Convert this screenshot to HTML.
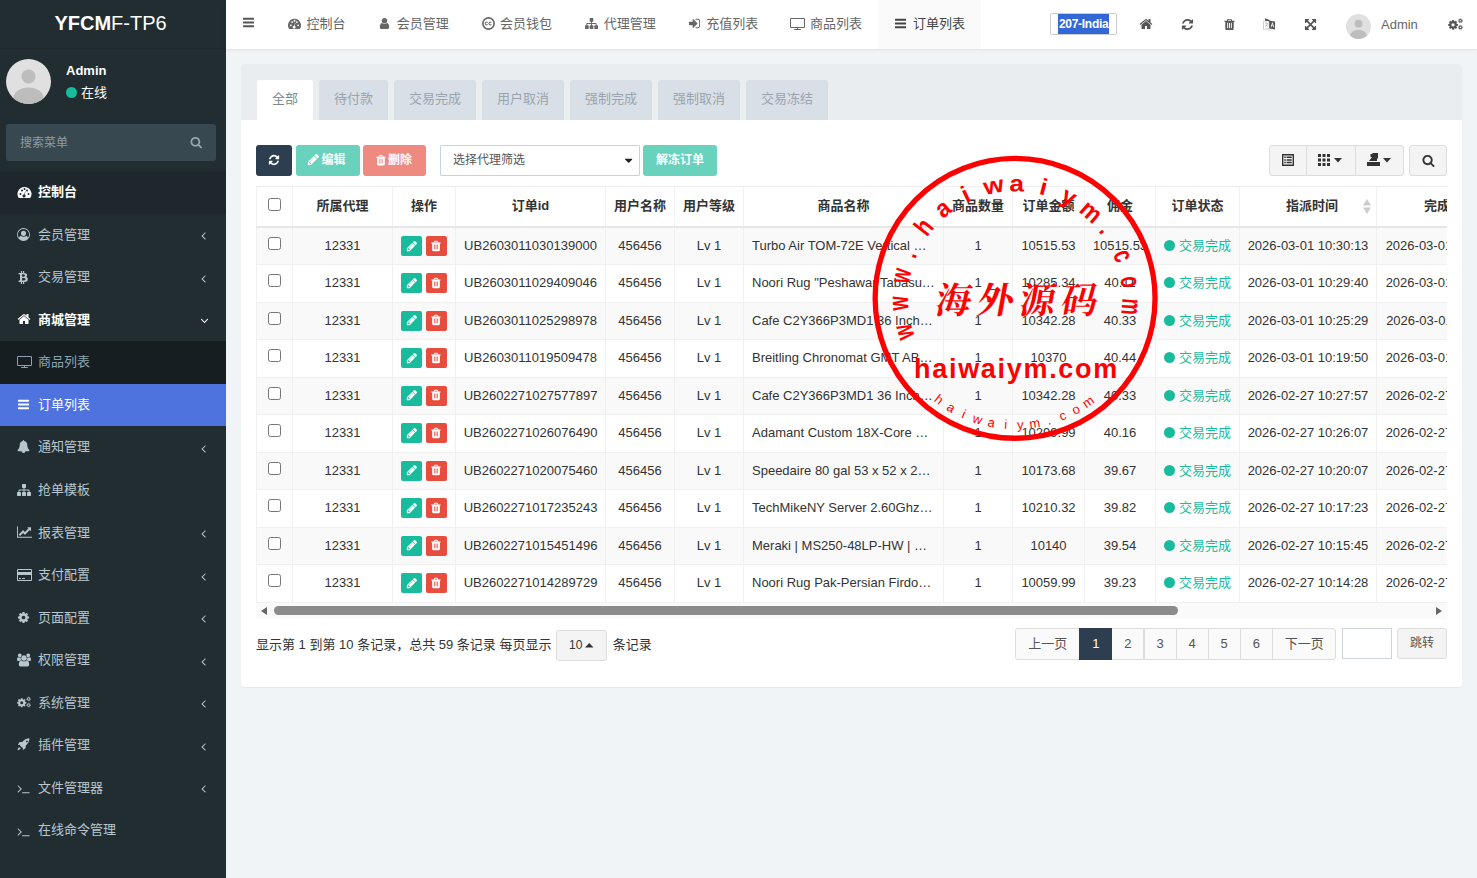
<!DOCTYPE html>
<html lang="zh-CN">
<head>
<meta charset="utf-8">
<title>YFCMF-TP6</title>
<style>
*{box-sizing:border-box;margin:0;padding:0}
html,body{width:1477px;height:878px;overflow:hidden}
body{font-family:"Liberation Sans","Noto Sans CJK SC",sans-serif;font-size:13px;line-height:1.42857;color:#333;background:#f1f4f6;position:relative}
svg{display:inline-block;vertical-align:middle;fill:currentColor}
/* sidebar */
#side{position:absolute;left:0;top:0;width:226px;height:878px;background:#222d32;color:#b8c7ce}
#logo{height:49px;line-height:47px;text-align:center;padding-right:5px;color:#fff;font-size:20px;background:#222d32;border-bottom:1px solid #1f292e;letter-spacing:0}
#logo b{font-weight:bold}
#user{position:absolute;left:0;top:49px;width:226px;height:65px}
#user .av{position:absolute;left:6px;top:10px;width:45px;height:45px;border-radius:50%;background:#e0e0e0;overflow:hidden}
#user .nm{position:absolute;left:66px;top:60px;color:#fff;font-weight:bold;font-size:14px}
#search{position:absolute;left:6px;top:124px;width:210px;height:37px;border-radius:3px;background:#374850;color:#8d9ca3;font-size:12px;line-height:38px;padding-left:14px}
#menu{position:absolute;left:0;top:171px;width:226px;list-style:none}
#menu li{height:42.57px;padding:12px 5px 12px 15px;position:relative;white-space:nowrap;font-size:13px;color:#b8c7ce}
#menu li .ic{position:absolute;left:17px;top:12px;width:20px;height:18px;text-align:left;line-height:18px}
#menu li .tx{position:absolute;left:38px;top:12.0px}
#menu li .ic svg{vertical-align:middle;margin-top:-2px}
#menu li .ar{position:absolute;right:20px;top:15.5px}
#menu li.hd{background:#1e282c;color:#fff;font-weight:bold}
#menu li.op{color:#fff;font-weight:bold}
#menu li.op2{color:#b8c7ce}
#menu li.sub{background:#171e21;color:#8aa4af;padding-left:15px;height:43.2px}
#menu li.act{background:#4e73df;color:#fff;height:41.94px}
#menu li.act .ic,#menu li.act .tx{top:11.4px}
/* top nav */
#nav{position:absolute;left:226px;top:0;width:1251px;height:49px;background:#fff;box-shadow:0 1px 3px rgba(0,0,0,.08);color:#555}
#nav .tab{position:absolute;top:0;height:48px;line-height:47px;font-size:13px;color:#666;white-space:nowrap}
#nav .tab svg{margin-right:5px;margin-top:-2px}
#nav .tab.on{background:#fafafa;color:#444;height:49px}
#nav .ri{position:absolute;top:0;height:48px;line-height:48px;color:#555}
/* panel */
#panel{position:absolute;left:241px;top:64px;width:1221px;height:623px;background:#fff;border-radius:3px;box-shadow:0 1px 1px rgba(0,0,0,.05)}
#phead{position:absolute;left:0;top:0;width:1221px;height:56px;background:#e9edf0;border-radius:3px 3px 0 0}
#phead .t{position:absolute;top:16px;height:40px;line-height:37px;background:#d9dfe6;color:#9aa4ad;font-size:13px;text-align:center;border-radius:3px 3px 0 0}
#phead .t.on{background:#fff;color:#7b8a8b}
.btn{position:absolute;height:31px;line-height:31px;border-radius:3px;color:#fff;font-size:12px;text-align:center;font-weight:normal;white-space:nowrap}

#tb{position:absolute;left:15px;top:122px;width:1191px;height:417px;overflow:hidden}
#tb table{border-collapse:collapse;table-layout:fixed;width:1259px;font-size:13px;color:#333}
#tb th,#tb td{border:1px solid #f0f0f0;text-align:center;vertical-align:middle;white-space:nowrap;overflow:hidden;padding:0}
#tb th{height:40.5px;font-weight:bold;border-bottom:2px solid #e6e6e6;color:#333}
#tb td{height:37.5px;padding-top:0.6px}
#tb tr.o td{background:#f9f9f9}
#tb td.l{text-align:left;padding-left:8px}
.cb{display:inline-block;width:13px;height:13px;border:1px solid #767676;border-radius:2.5px;background:#fff;vertical-align:middle;margin-top:-4px}
#tb td .cb{margin-top:-6px}
.xb{display:inline-block;width:21px;height:20px;border-radius:2px;vertical-align:middle;color:#fff;text-align:center;line-height:18px}
.xb svg{vertical-align:middle}
#tb td .xb{margin-top:-.6px}
.st{color:#18bc9c}
.st i{display:inline-block;width:11px;height:11px;border-radius:50%;background:#18bc9c;margin-right:4px;vertical-align:-1px}
.pg{position:absolute;top:564px;height:31.5px;line-height:30px;border:1px solid #ddd;background:#fafafa;color:#555;text-align:center;font-size:13px}
</style>
</head>
<body>
<svg width="0" height="0" style="position:absolute">
<defs>
<symbol id="i-bars" viewBox="0 0 1536 1792"><path d="M1536 1344v128q0 26-19 45t-45 19H64q-26 0-45-19t-19-45v-128q0-26 19-45t45-19h1408q26 0 45 19t19 45zm0-512v128q0 26-19 45t-45 19H64q-26 0-45-19T0 960V832q0-26 19-45t45-19h1408q26 0 45 19t19 45zm0-512v128q0 26-19 45t-45 19H64q-26 0-45-19T0 448V320q0-26 19-45t45-19h1408q26 0 45 19t19 45z"/></symbol>
<symbol id="i-search" viewBox="0 0 1792 1792"><path d="M1216 832q0-185-131.500-316.500t-316.500-131.500-316.500 131.500-131.500 316.500 131.500 316.500 316.500 131.500 316.500-131.500 131.500-316.500zm512 832q0 52-38 90t-90 38q-54 0-90-38l-343-342q-179 124-399 124-143 0-273.500-55.500t-225-150-150-225-55.500-273.500 55.500-273.500 150-225 225-150 273.500-55.500 273.500 55.500 225 150 150 225 55.500 273.500q0 220-124 399l343 343q37 37 37 90z"/></symbol>
<symbol id="i-home" viewBox="0 0 1792 1792"><path d="M1472 992v480q0 26-19 45t-45 19h-384v-384h-256v384h-384q-26 0-45-19t-19-45v-480q0-1 .5-3t.5-3l575-474 575 474q1 2 1 6zm223-69l-62 74q-8 9-21 11h-3q-13 0-21-7l-692-577-692 577q-12 8-24 7-13-2-21-11l-62-74q-8-10-7-23.500t11-21.500l719-599q32-26 76-26t76 26l244 204v-195q0-14 9-23t23-9h192q14 0 23 9t9 23v408l219 182q10 8 11 21.500t-7 23.500z"/></symbol>
<symbol id="i-trash" viewBox="0 0 1792 1792"><path d="M704 1376v-704q0-14-9-23t-23-9h-64q-14 0-23 9t-9 23v704q0 14 9 23t23 9h64q14 0 23-9t9-23zm256 0v-704q0-14-9-23t-23-9h-64q-14 0-23 9t-9 23v704q0 14 9 23t23 9h64q14 0 23-9t9-23zm256 0v-704q0-14-9-23t-23-9h-64q-14 0-23 9t-9 23v704q0 14 9 23t23 9h64q14 0 23-9t9-23zm-544-992h448l-48-117q-7-9-17-11h-317q-10 2-17 11zm928 32v64q0 14-9 23t-23 9h-96v948q0 83-47 143.500t-113 60.500h-832q-66 0-113-58.500t-47-141.500v-952h-96q-14 0-23-9t-9-23v-64q0-14 9-23t23-9h309l70-167q15-37 54-63t79-26h320q40 0 79 26t54 63l70 167h309q14 0 23 9t9 23z"/></symbol>
<symbol id="i-refresh" viewBox="0 0 1792 1792"><path d="M1639 1056q0 5-1 7-64 268-268 434.500t-478 166.500q-146 0-282.500-55t-243.500-157l-129 129q-19 19-45 19t-45-19-19-45v-448q0-26 19-45t45-19h448q26 0 45 19t19 45-19 45l-137 137q71 66 161 102t187 36q134 0 250-65t186-179q11-17 53-117 8-23 30-23h192q13 0 22.500 9.500t9.500 22.500zm25-800v448q0 26-19 45t-45 19h-448q-26 0-45-19t-19-45 19-45l138-138q-148-137-349-137-134 0-250 65t-186 179q-11 17-53 117-8 23-30 23h-199q-13 0-22.500-9.500t-9.500-22.500v-7q65-268 270-434.500t480-166.500q146 0 284 55.500t245 156.500l130-129q19-19 45-19t45 19 19 45z"/></symbol>
<symbol id="i-pencil" viewBox="0 0 1792 1792"><path d="M491 1536l91-91-235-235-91 91v107h128v128h107zm523-928q0-22-22-22-10 0-17 7l-542 542q-7 7-7 17 0 22 22 22 10 0 17-7l542-542q7-7 7-17zm-54-192l416 416-832 832h-416v-416zm683 96q0 53-37 90l-166 166-416-416 166-165q36-38 90-38 53 0 91 38l235 234q37 39 37 91z"/></symbol>
<symbol id="i-user" viewBox="0 0 1792 1792"><path d="M1536 1399q0 109-62.500 187t-150.500 78h-854q-88 0-150.500-78t-62.500-187q0-85 8.500-160.500t31.500-152 58.500-131 94-89 134.500-34.500q131 128 313 128t313-128q76 0 134.500 34.500t94 89 58.500 131 31.500 152 8.500 160.500zm-256-887q0 159-112.500 271.500t-271.500 112.500-271.500-112.500-112.500-271.500 112.500-271.500 271.500-112.500 271.500 112.500 112.500 271.500z"/></symbol>
<symbol id="i-bell" viewBox="0 0 1792 1792"><path d="M912 1696q0-16-16-16-59 0-101.500-42.500t-42.500-101.500q0-16-16-16t-16 16q0 73 51.500 124.500t124.500 51.500q16 0 16-16zm816-288q0 52-38 90t-90 38h-448q0 106-75 181t-181 75-181-75-75-181h-448q-52 0-90-38t-38-90q50-42 91-88t85-119.500 74.500-158.500 50-206 19.500-260q0-152 117-282.500t307-158.500q-8-19-8-39 0-40 28-68t68-28 68 28 28 68q0 20-8 39 190 28 307 158.500t117 282.500q0 139 19.500 260t50 206 74.500 158.500 85 119.500 91 88z"/></symbol>
<symbol id="i-cog" viewBox="0 0 1792 1792"><path d="M1152 896q0-106-75-181t-181-75-181 75-75 181 75 181 181 75 181-75 75-181zm512-109v222q0 12-8 23t-20 13l-185 28q-19 54-39 91 35 50 107 138 10 12 10 25t-9 23q-27 37-99 108t-94 71q-12 0-26-9l-138-108q-44 23-91 38-16 136-29 186-7 28-36 28h-222q-14 0-24.500-8.500t-11.500-21.500l-28-184q-49-16-90-37l-141 107q-10 9-25 9-14 0-25-11-126-114-165-168-7-10-7-23 0-12 8-23 15-21 51-66.500t54-70.500q-27-50-41-99l-183-27q-13-2-21-12.500t-8-23.500v-222q0-12 8-23t19-13l186-28q14-46 39-92-40-57-107-138-10-12-10-24 0-10 9-23 26-36 98.500-107.500t94.500-71.500q13 0 26 10l138 107q44-23 91-38 16-136 29-186 7-28 36-28h222q14 0 24.500 8.500t11.500 21.500l28 184q49 16 90 37l142-107q9-9 24-9 13 0 25 10 129 119 165 170 7 8 7 22 0 12-8 23-15 21-51 66.500t-54 70.500q26 50 41 98l183 28q13 2 21 12.500t8 23.500z"/></symbol>
<symbol id="i-desktop" viewBox="0 0 15 12"><path fill-rule="evenodd" d="M1.200 0h12.600a1.200 1.200 0 0 1 1.200 1.200v7.600a1.200 1.200 0 0 1-1.200 1.200H8v1h2.500a.5.5 0 0 1 0 1h-6a.5.5 0 0 1 0-1H7v-1H1.200A1.200 1.200 0 0 1 0 8.800V1.200A1.200 1.200 0 0 1 1.200 0zM1 1.300v7.400a.3.3 0 0 0 .3.300h12.400a.3.3 0 0 0 .3-.3V1.300a.3.3 0 0 0-.3-.3H1.300a.3.3 0 0 0-.3.300z"/></symbol>
<symbol id="i-dash" viewBox="0 0 1792 1792"><path fill-rule="evenodd" d="M896 256a896 896 0 0 0-756 1376q18 32 54 32h1404q36 0 54-32A896 896 0 0 0 896 256zM384 1280a128 128 0 1 1 0-256 128 128 0 0 1 0 256zm192-448a128 128 0 1 1 0-256 128 128 0 0 1 0 256zm320-192a128 128 0 1 1 0-256 128 128 0 0 1 0 256zm-30 560 100-380q8-28 36-22t24 36l-100 382a200 200 0 1 1-60-16zm350-368a128 128 0 1 1 0-256 128 128 0 0 1 0 256zm192 448a128 128 0 1 1 0-256 128 128 0 0 1 0 256z"/></symbol>
<symbol id="i-sitemap" viewBox="0 0 1792 1792"><path d="M1792 1248v320q0 40-28 68t-68 28h-320q-40 0-68-28t-28-68v-320q0-40 28-68t68-28h96v-192h-512v192h96q40 0 68 28t28 68v320q0 40-28 68t-68 28h-320q-40 0-68-28t-28-68v-320q0-40 28-68t68-28h96v-192h-512v192h96q40 0 68 28t28 68v320q0 40-28 68t-68 28h-320q-40 0-68-28t-28-68v-320q0-40 28-68t68-28h96v-192q0-52 38-90t90-38h512v-192h-96q-40 0-68-28t-28-68v-320q0-40 28-68t68-28h320q40 0 68 28t28 68v320q0 40-28 68t-68 28h-96v192h512q52 0 90 38t38 90v192h96q40 0 68 28t28 68z"/></symbol>
<symbol id="i-signin" viewBox="0 0 1792 1792"><path d="M1312 896q0 26-19 45l-544 544q-19 19-45 19t-45-19-19-45v-288h-448q-26 0-45-19t-19-45v-384q0-26 19-45t45-19h448v-288q0-26 19-45t45-19 45 19l544 544q19 19 19 45zm352-352v704q0 119-84.500 203.500t-203.500 84.500h-320q-13 0-22.500-9.500t-9.500-22.500q0-4-1-20t-.5-26.500 3-23.500 10-19.500 20.500-6.500h320q66 0 113-47t47-113v-704q0-66-47-113t-113-47h-312l-11.500-1-11.500-3-8-5.500-7-9-2-13.500q0-4-1-20t-.5-26.500 3-23.500 10-19.500 20.500-6.500h320q119 0 203.500 84.500t84.500 203.500z"/></symbol>
<symbol id="i-angle-l" viewBox="0 0 640 1792"><path d="M627 544q0 13-10 23l-393 393 393 393q10 10 10 23t-10 23l-50 50q-10 10-23 10t-23-10l-466-466q-10-10-10-23t10-23l466-466q10-10 23-10t23 10l50 50q10 10 10 23z"/></symbol>
<symbol id="i-angle-d" viewBox="0 0 1152 1792"><path d="M1075 736q0 13-10 23l-466 466q-10 10-23 10t-23-10l-466-466q-10-10-10-23t10-23l50-50q10-10 23-10t23 10l393 393 393-393q10-10 23-10t23 10l50 50q10 10 10 23z"/></symbol>
<symbol id="i-caret-d" viewBox="0 0 1024 1792"><path d="M1024 704q0 26-19 45l-448 448q-19 19-45 19t-45-19l-448-448q-19-19-19-45t19-45 45-19h896q26 0 45 19t19 45z"/></symbol>
<symbol id="i-userc" viewBox="0 0 1792 1792"><path fill-rule="evenodd" d="M896 0a896 896 0 1 0 0 1792A896 896 0 0 0 896 0zm0 128a768 768 0 0 1 618 1224q-50-246-226-290-150 154-392 154t-392-154q-176 44-226 290A768 768 0 0 1 896 128zm0 256a352 352 0 1 0 0 704 352 352 0 0 0 0-704z"/></symbol>
<symbol id="i-btc" viewBox="0 0 1280 1792"><path fill-rule="evenodd" d="M1167 640q18 182-131 258 117 28 175 103t45 214q-7 71-32.500 125t-64.500 89-97 58.500-121.500 34.500-145.500 15v255h-154v-251q-80 0-122-1v252h-154v-255q-18 0-54-.5t-55-.5h-200l31-183h111q50 0 58-51v-402h16q-6-1-16-1v-287q-13-68-89-68h-111v-164l212 1q64 0 97-1v-252h154v247q82-2 122-2v-245h154v252q79 7 140 22.500t113 45 82.500 78 36.500 114.500zm-215 545q0-36-15-64t-37-46-57.500-30.500-65.500-18.500-74-9-69-3-64.500.5-46.500 1v338q8 0 37 .5t48 .5 53-1.500 58.500-4 57-8.500 55.500-14 47.500-21 39.500-30 24.500-40 9.500-51zm-71-476q0-33-12.500-58.500t-30.500-42-48-28-55-16.500-61.500-8-58-2.500-54 1-39.500.5v307q5 0 34.500.5t46.500 0 50-2 55-5.500 51.500-11 48.500-18.500 37-27 27-38.500 9-51z"/></symbol>
<symbol id="i-chart" viewBox="0 0 2048 1792"><path d="M2048 1536v128h-2048v-1536h128v1408h1920zm-128-1248v435q0 21-19.500 29.500t-35.500-7.500l-121-121-633 633q-10 10-23 10t-23-10l-233-233-416 416-192-192 585-585q10-10 23-10t23 10l233 233 464-464-121-121q-16-16-7.500-35.500t29.500-19.500h435q14 0 23 9t9 23z"/></symbol>
<symbol id="i-card" viewBox="0 0 1920 1792"><path d="M1760 128q66 0 113 47t47 113v1216q0 66-47 113t-113 47h-1600q-66 0-113-47t-47-113v-1216q0-66 47-113t113-47h1600zm-1600 128q-13 0-22.500 9.500t-9.500 22.500v224h1664v-224q0-13-9.500-22.500t-22.500-9.500h-1600zm1600 1280q13 0 22.500-9.500t9.500-22.500v-608h-1664v608q0 13 9.500 22.500t22.500 9.500h1600zm-1504-128v-128h256v128h-256zm384 0v-128h384v128h-384z"/></symbol>
<symbol id="i-users" viewBox="0 0 1920 1792"><path d="M593 896q-162 5-265 128h-134q-82 0-138-40.500t-56-118.500q0-353 124-353 6 0 43.500 21t97.500 42.500 119 21.500q67 0 133-23-5 37-5 66 0 139 81 256zm1071 637q0 120-73 189.500t-194 69.500h-874q-121 0-194-69.500t-73-189.500q0-53 3.500-103.500t14-109 26.500-108.500 43-97.500 62-81 85.500-53.500 111.500-20q10 0 43 21.500t73 48 107 48 135 21.500 135-21.500 107-48 73-48 43-21.500q61 0 111.500 20t85.500 53.500 62 81 43 97.500 26.500 108.500 14 109 3.500 103.500zm-1024-1277q0 106-75 181t-181 75-181-75-75-181 75-181 181-75 181 75 75 181zm704 384q0 159-112.500 271.500t-271.500 112.500-271.500-112.500-112.500-271.500 112.500-271.500 271.500-112.500 271.500 112.500 112.500 271.500zm576 225q0 78-56 118.500t-138 40.500h-134q-103-123-265-128 81-117 81-256 0-29-5-66 66 23 133 23 59 0 119-21.500t97.500-42.500 43.500-21q124 0 124 353zm-128-609q0 106-75 181t-181 75-181-75-75-181 75-181 181-75 181 75 75 181z"/></symbol>
<symbol id="i-cogs" viewBox="0 0 1920 1792"><g><path fill-rule="evenodd" d="M1140 900l-150-22q-12-40-32-76 30-42 88-112 8-10 8-20 0-8-8-18-22-30-80-88t-78-58q-10 0-20 8l-112 88q-36-18-76-32-12-110-24-152-6-22-30-22H448q-12 0-20 7t-10 17l-22 150q-40 14-74 30L206 512q-8-8-20-8-10 0-20 8-106 98-136 140-6 6-6 18 0 10 6 18 12 18 42 55t44 57q-22 42-34 82L-66 904q-10 2-17 10t-7 20v180q0 10 7 19t17 11l150 22q12 38 32 76-32 46-88 112-8 10-8 20 0 11 8 19 20 30 80 88t78 59q10 0 22-8l112-88q36 18 74 30 14 112 24 152 6 24 30 24h180q12 0 20-7t10-17l22-150q40-14 74-30l116 88q8 6 20 6 10 0 20-8 104-96 136-140 6-8 6-18 0-10-6-20-12-16-42-54t-44-56q22-42 34-82l150-22q10-2 17-11t7-19V934q0-10-7-19t-17-11zM538 1234a210 210 0 1 1 0-420 210 210 0 0 1 0 420z" transform="translate(110 -20)"/><circle cx="1590" cy="480" r="165" fill="none" stroke="currentColor" stroke-width="130"/><circle cx="1590" cy="480" r="260" fill="none" stroke="currentColor" stroke-width="110" stroke-dasharray="102 102"/><circle cx="1590" cy="1330" r="165" fill="none" stroke="currentColor" stroke-width="130"/><circle cx="1590" cy="1330" r="260" fill="none" stroke="currentColor" stroke-width="110" stroke-dasharray="102 102"/></g></symbol>
<symbol id="i-rocket" viewBox="0 0 1792 1792"><path d="M1700 60q-30-30-70-24-420 50-760 360-60 56-130 140l-360 30q-30 4-46 30L150 900q-14 30 6 56t52 20l250-50q-20 50-34 90-8 30 14 52l250 250q22 22 52 14 40-12 90-34l-50 250q-6 32 20 52t56 6l304-184q26-16 30-46l30-360q84-70 140-130 310-340 360-760 6-40-20-66zm-340 530a130 130 0 1 1 0-260 130 130 0 0 1 0 260zM330 1270q-110 30-170 130T60 1700q200-40 300-100t130-170z"/></symbol>
<symbol id="i-term" viewBox="0 0 1792 1792"><path d="M649 983l-466 466q-10 10-23 10t-23-10l-50-50q-10-10-10-23t10-23l393-393-393-393q-10-10-10-23t10-23l50-50q10-10 23-10t23 10l466 466q10 10 10 23t-10 23zm1079 457v64q0 14-9 23t-23 9h-960q-14 0-23-9t-9-23v-64q0-14 9-23t23-9h960q14 0 23 9t9 23z"/></symbol>
<symbol id="i-cc" viewBox="0 0 1792 1792"><circle cx="896" cy="896" r="780" fill="none" stroke="currentColor" stroke-width="230"/><path d="M764.400 761.600A190 190 0 1 0 764.400 1030.400M1284.400 761.600A190 190 0 1 0 1284.400 1030.400" fill="none" stroke="currentColor" stroke-width="140"/></symbol>
<symbol id="i-full" viewBox="0 0 1792 1792"><path d="M1411 541l-355 355 355 355 144-144q29-31 70-14 39 17 39 59v448q0 26-19 45t-45 19h-448q-42 0-59-40-17-39 14-69l144-144-355-355-355 355 144 144q31 30 14 69-17 40-59 40h-448q-26 0-45-19t-19-45v-448q0-42 40-59 39-17 69 14l144 144 355-355-355-355-144 144q-19 19-45 19-12 0-24-5-40-17-40-59v-448q0-26 19-45t45-19h448q42 0 59 40 17 39-14 69l-144 144 355 355 355-355-144-144q-31-30-14-69 17-40 59-40h448q26 0 45 19t19 45v448q0 42-39 59-13 5-25 5-26 0-45-19z"/></symbol>
<symbol id="i-lang" viewBox="0 0 13 13"><path d="M2 .2l4.600 1.700v1.300L2 2.700z"/><path fill-rule="evenodd" d="M6.200 2.600L12 3.600v7.800l-5.800-1zM9.100 4.600l-1.500 4.600h.8l.35-1.150h1.300l.35 1.150h.8L9.700 4.600zm.3 1.200l.45 1.600h-.9z"/><path d="M.5 3.400l5.700-.8v7.800l-5.700.9z" fill="none" stroke="currentColor" stroke-width=".5" opacity=".55"/><path d="M2 5.200h2.800M3.400 4.500v.7M2.300 8.400c1.300-.6 2-1.700 2.200-3.200M2.600 6.300c.4 1 1.200 1.700 2.200 2.100" fill="none" stroke="currentColor" stroke-width=".55" opacity=".6"/><path d="M3.500 11.800l4 .7 1.500-1.200" fill="none" stroke="currentColor" stroke-width=".4" opacity=".5"/></symbol>
<symbol id="i-listalt" viewBox="0 0 1792 1792"><path d="M384 1184v64q0 13-9.500 22.500t-22.500 9.500h-64q-13 0-22.500-9.500t-9.500-22.500v-64q0-13 9.500-22.500t22.500-9.500h64q13 0 22.500 9.500t9.500 22.500zm0-256v64q0 13-9.500 22.500t-22.500 9.500h-64q-13 0-22.500-9.500t-9.500-22.500v-64q0-13 9.500-22.500t22.500-9.500h64q13 0 22.500 9.500t9.500 22.500zm0-256v64q0 13-9.500 22.500t-22.500 9.500h-64q-13 0-22.500-9.500t-9.500-22.500v-64q0-13 9.500-22.500t22.500-9.500h64q13 0 22.500 9.500t9.500 22.500zm1152 512v64q0 13-9.500 22.500t-22.500 9.500h-960q-13 0-22.500-9.500t-9.500-22.500v-64q0-13 9.500-22.500t22.500-9.500h960q13 0 22.500 9.500t9.500 22.500zm0-256v64q0 13-9.500 22.500t-22.500 9.500h-960q-13 0-22.500-9.500t-9.500-22.500v-64q0-13 9.500-22.500t22.500-9.500h960q13 0 22.500 9.500t9.500 22.500zm0-256v64q0 13-9.500 22.500t-22.500 9.500h-960q-13 0-22.500-9.500t-9.500-22.500v-64q0-13 9.500-22.500t22.500-9.500h960q13 0 22.500 9.500t9.500 22.500zm128 704v-832q0-13-9.500-22.500t-22.500-9.500h-1472q-13 0-22.500 9.500t-9.500 22.500v832q0 13 9.500 22.500t22.500 9.500h1472q13 0 22.500-9.500t9.500-22.500zm128-1088v1088q0 66-47 113t-113 47h-1472q-66 0-113-47t-47-113v-1088q0-66 47-113t113-47h1472q66 0 113 47t47 113z"/></symbol>
<symbol id="i-trash2" viewBox="0 0 1792 1792"><path fill-rule="evenodd" d="M672 384h448l-48-117q-7-9-17-11h-317q-10 2-17 11zm928 32v64q0 14-9 23t-23 9h-96v948q0 83-47 143.500t-113 60.500h-832q-66 0-113-58.500t-47-141.500v-952h-96q-14 0-23-9t-9-23v-64q0-14 9-23t23-9h309l70-167q15-37 54-63t79-26h320q40 0 79 26t54 63l70 167h309q14 0 23 9t9 23zM590 680v700h110V680zm250 0v700h110V680zm250 0v700h110V680z"/></symbol>
</defs></svg>
<div id="side">
<div id="logo"><b>YFCM</b>F-TP6</div>
<div id="user"><div class="av"><svg width="45" height="45" viewBox="0 0 45 45"><circle cx="22.5" cy="17.5" r="7" fill="#bdbdbd"/><ellipse cx="22.5" cy="39" rx="15" ry="10.5" fill="#bdbdbd"/></svg></div></div>
<div class="nm" style="position:absolute;left:66px;top:60.500px;color:#fff;font-weight:bold;font-size:13px;line-height:20px">Admin</div>
<div style="position:absolute;left:66px;top:82.5px;color:#fff;font-size:13px;line-height:20px"><span style="display:inline-block;width:11px;height:11px;border-radius:50%;background:#18bc9c;vertical-align:-1px;margin-right:4px"></span>在线</div>
<div id="search">搜索菜单<svg width="12.500" height="12.500" style="position:absolute;right:13.500px;top:12px;color:#98a6ac"><use href="#i-search"/></svg></div>
<ul id="menu">
<li class="hd"><span class="ic"><svg width="15" height="14"><use href="#i-dash"/></svg></span><span class="tx">控制台</span></li>
<li class=""><span class="ic"><svg width="13" height="13"><use href="#i-userc"/></svg></span><span class="tx">会员管理</span><svg class="ar" width="5" height="13"><use href="#i-angle-l"/></svg></li>
<li class=""><span class="ic"><svg width="10" height="14" style="margin-left:1px"><use href="#i-btc"/></svg></span><span class="tx">交易管理</span><svg class="ar" width="5" height="13"><use href="#i-angle-l"/></svg></li>
<li class="op"><span class="ic"><svg width="14" height="14"><use href="#i-home"/></svg></span><span class="tx">商城管理</span><svg class="ar" width="9" height="13" style="right:17px"><use href="#i-angle-d"/></svg></li>
<li class="sub"><span class="ic"><svg width="15" height="12" style="margin-top:-1px"><use href="#i-desktop"/></svg></span><span class="tx">商品列表</span></li>
<li class="act"><span class="ic"><svg width="13" height="13"><use href="#i-bars"/></svg></span><span class="tx">订单列表</span></li>
<li class=""><span class="ic"><svg width="13" height="13"><use href="#i-bell"/></svg></span><span class="tx">通知管理</span><svg class="ar" width="5" height="13"><use href="#i-angle-l"/></svg></li>
<li class="op2"><span class="ic"><svg width="14" height="14"><use href="#i-sitemap"/></svg></span><span class="tx">抢单模板</span></li>
<li class=""><span class="ic"><svg width="15" height="14"><use href="#i-chart"/></svg></span><span class="tx">报表管理</span><svg class="ar" width="5" height="13"><use href="#i-angle-l"/></svg></li>
<li class=""><span class="ic"><svg width="15" height="14"><use href="#i-card"/></svg></span><span class="tx">支付配置</span><svg class="ar" width="5" height="13"><use href="#i-angle-l"/></svg></li>
<li class=""><span class="ic"><svg width="13" height="13" style="margin-left:-.5px"><use href="#i-cog"/></svg></span><span class="tx">页面配置</span><svg class="ar" width="5" height="13"><use href="#i-angle-l"/></svg></li>
<li class=""><span class="ic"><svg width="14" height="14"><use href="#i-users"/></svg></span><span class="tx">权限管理</span><svg class="ar" width="5" height="13"><use href="#i-angle-l"/></svg></li>
<li class=""><span class="ic"><svg width="14" height="14"><use href="#i-cogs"/></svg></span><span class="tx">系统管理</span><svg class="ar" width="5" height="13"><use href="#i-angle-l"/></svg></li>
<li class=""><span class="ic"><svg width="13" height="13"><use href="#i-rocket"/></svg></span><span class="tx">插件管理</span><svg class="ar" width="5" height="13"><use href="#i-angle-l"/></svg></li>
<li class=""><span class="ic"><svg width="13" height="13" style="margin-top:0"><use href="#i-term"/></svg></span><span class="tx">文件管理器</span><svg class="ar" width="5" height="13"><use href="#i-angle-l"/></svg></li>
<li class=""><span class="ic"><svg width="13" height="13" style="margin-top:0"><use href="#i-term"/></svg></span><span class="tx">在线命令管理</span></li>
</ul>
</div>
<div id="nav">
<svg width="11.140" height="13" style="position:absolute;left:16.800px;top:16.200px;color:#555"><use href="#i-bars"/></svg>
<div class="tab" style="left:46px;width:90px"><svg width="13" height="13" style="position:absolute;left:15.8px;top:16.5px;margin:0"><use href="#i-dash"/></svg><span style="position:absolute;left:34.5px;top:0">控制台</span></div>
<div class="tab" style="left:136px;width:102px"><svg width="13" height="13" style="position:absolute;left:16.4px;top:16.6px;margin:0"><use href="#i-user"/></svg><span style="position:absolute;left:34.8px;top:0">会员管理</span></div>
<div class="tab" style="left:238px;width:104px"><svg width="13" height="13" style="position:absolute;left:17.7px;top:16.9px;margin:0"><use href="#i-cc"/></svg><span style="position:absolute;left:36.0px;top:0">会员钱包</span></div>
<div class="tab" style="left:342px;width:104px"><svg width="13" height="13" style="position:absolute;left:16.5px;top:17.0px;margin:0"><use href="#i-sitemap"/></svg><span style="position:absolute;left:35.8px;top:0">代理管理</span></div>
<div class="tab" style="left:446px;width:102px"><svg width="13" height="13" style="position:absolute;left:16.0px;top:17.06px;margin:0"><use href="#i-signin"/></svg><span style="position:absolute;left:34.3px;top:0">充值列表</span></div>
<div class="tab" style="left:548px;width:104px"><svg width="15" height="12" style="position:absolute;left:16.2px;top:17.7px;margin:0"><use href="#i-desktop"/></svg><span style="position:absolute;left:36.0px;top:0">商品列表</span></div>
<div class="tab on" style="left:652px;width:103px"><svg width="11.14" height="13" style="position:absolute;left:17.4px;top:16.5px;margin:0"><use href="#i-bars"/></svg><span style="position:absolute;left:35.0px;top:0">订单列表</span></div>
<div style="position:absolute;left:824px;top:13px;width:67px;height:22px;border:1px solid #ccc;border-radius:2px;background:#fff"><span style="position:absolute;left:7px;top:0;height:20px;line-height:20px;background:#3367d6;color:#fff;font-size:12px;font-weight:bold;letter-spacing:-0.3px;padding:0 1px">207-India</span></div>
<svg width="14" height="14" style="position:absolute;left:913.0px;top:17.0px;color:#555"><use href="#i-home"/></svg>
<svg width="13" height="13" style="position:absolute;left:954.5px;top:17.5px;color:#555"><use href="#i-refresh"/></svg>
<svg width="13" height="13" style="position:absolute;left:996.5px;top:17.5px;color:#555"><use href="#i-trash"/></svg>
<svg width="13" height="13" style="position:absolute;left:1037px;top:17.600px;color:#555"><use href="#i-lang"/></svg>
<svg width="13" height="13" style="position:absolute;left:1077.5px;top:17.5px;color:#555"><use href="#i-full"/></svg>
<div style="position:absolute;left:1120px;top:14px;width:25px;height:25px;border-radius:50%;background:#e0e0e0;overflow:hidden"><svg width="25" height="25" viewBox="0 0 45 45" style="vertical-align:top"><circle cx="22.5" cy="17.5" r="7" fill="#bdbdbd"/><ellipse cx="22.5" cy="39" rx="15" ry="10.5" fill="#bdbdbd"/></svg></div>
<div style="position:absolute;left:1155px;top:0;line-height:49px;font-size:13px;color:#666">Admin</div>
<svg width="15" height="14" style="position:absolute;left:1222px;top:17px;color:#555"><use href="#i-cogs"/></svg>
</div>
<div id="panel">
<div id="phead">
<div class="t on" style="left:16px;width:56px">全部</div>
<div class="t" style="left:78px;width:69px">待付款</div>
<div class="t" style="left:153px;width:82px">交易完成</div>
<div class="t" style="left:241px;width:82px">用户取消</div>
<div class="t" style="left:329px;width:82px">强制完成</div>
<div class="t" style="left:417px;width:82px">强制取消</div>
<div class="t" style="left:505px;width:82px">交易冻结</div>
</div>
<div class="btn" style="left:15px;top:81px;width:36px;background:#2c3e50"><svg width="12" height="12" style="margin-top:-2px"><use href="#i-refresh"/></svg></div>
<div class="btn" style="left:55px;top:81px;width:64px;background:#69d2bd"><svg width="13" height="13" style="margin-top:-2px;margin-right:1px;margin-left:-3px"><use href="#i-pencil"/></svg><b>编辑</b></div>
<div class="btn" style="left:122px;top:81px;width:63px;background:#ee8a80"><svg width="12" height="12.500" style="margin-top:-2px;margin-right:1px;margin-left:-2px"><use href="#i-trash2"/></svg><b>删除</b></div>
<div style="position:absolute;left:199px;top:81px;width:200px;height:31px;border:1px solid #ccd1dc;border-radius:1px;background:#fff;line-height:29px;padding-left:12px;font-size:12px;color:#555">选择代理筛选<svg width="7.400" height="13" style="position:absolute;right:6.500px;top:7.500px;color:#222"><use href="#i-caret-d"/></svg></div>
<div class="btn" style="left:402px;top:81px;width:74px;background:#69d2bd"><b>解冻订单</b></div>
<div style="position:absolute;left:1028px;top:81px;width:135px;height:31px;border:1px solid #ddd;border-radius:3px;background:#f4f4f4"></div>
<div style="position:absolute;left:1065px;top:81px;width:1px;height:31px;background:#ddd"></div><div style="position:absolute;left:1114px;top:81px;width:1px;height:31px;background:#ddd"></div>
<svg width="12" height="12" viewBox="0 0 12 12" style="position:absolute;left:1041px;top:90px;color:#333"><path fill-rule="evenodd" d="M0 0h12v12H0zM1.400 1.400v9.200h9.200V1.400zM2.300 2.600h1.500v1.500H2.300zM4.600 2.600h5.100v1.500H4.600zM2.300 5.200h1.500v1.500H2.300zM4.600 5.200h5.100v1.500H4.600zM2.300 7.800h1.500v1.500H2.300zM4.600 7.800h5.100v1.500H4.600z"/></svg>
<svg width="12" height="12" viewBox="0 0 12 12" style="position:absolute;left:1077px;top:90px;color:#333"><path d="M0 0h3v3H0zM4.5 0h3v3h-3zM9 0h3v3H9zM0 4.5h3v3H0zM4.500 4.500h3v3h-3zM9 4.500h3v3H9zM0 9h3v3H0zM4.500 9h3v3h-3zM9 9h3v3H9z"/></svg>
<svg width="8" height="5" viewBox="0 0 8 5" style="position:absolute;left:1093px;top:94px;color:#333"><path d="M0 0h8L4 4.500z"/></svg>
<svg width="13" height="13" viewBox="0 0 13 13" style="position:absolute;left:1126px;top:89px;color:#333"><path d="M0 9h13v4H0zM2 8l3-4H3.500V1H6l-1-1h6v6l-1-1v3z"/></svg>
<svg width="8" height="5" viewBox="0 0 8 5" style="position:absolute;left:1142px;top:94px;color:#333"><path d="M0 0h8L4 4.500z"/></svg>
<div style="position:absolute;left:1168px;top:81px;width:38px;height:31px;border:1px solid #ddd;border-radius:3px;background:#f4f4f4"><svg width="13" height="13" style="position:absolute;left:12px;top:8px;color:#333"><use href="#i-search"/></svg></div>
<div id="tb"><table><colgroup><col style="width:36px"><col style="width:100px"><col style="width:63px"><col style="width:150px"><col style="width:69px"><col style="width:69px"><col style="width:200px"><col style="width:69px"><col style="width:72px"><col style="width:71px"><col style="width:84px"><col style="width:137px"><col style="width:139px"></colgroup>
<tr><th><span class="cb"></span></th><th>所属代理</th><th>操作</th><th>订单id</th><th>用户名称</th><th>用户等级</th><th>商品名称</th><th>商品数量</th><th>订单金额</th><th>佣金</th><th>订单状态</th><th style="position:relative;padding-left:8px">指派时间<svg width="8" height="15" viewBox="0 0 8 15" style="position:absolute;right:5.500px;top:12px;color:#ccc"><path d="M0 6.500L4 0l4 6.500zM0 8.500l4 6.500 4-6.500z"/></svg></th><th style="padding-left:8px">完成时间</th></tr>
<tr class="o"><td><span class="cb"></span></td><td>12331</td><td><span class="xb" style="background:#18bc9c"><svg width="12" height="12"><use href="#i-pencil"/></svg></span> <span class="xb" style="background:#e74c3c"><svg width="12" height="12"><use href="#i-trash2"/></svg></span></td><td>UB2603011030139000</td><td>456456</td><td>Lv 1</td><td class="l">Turbo Air TOM-72E Vertical …</td><td>1</td><td>10515.53</td><td>10515.53</td><td><span class="st"><i></i>交易完成</span></td><td>2026-03-01 10:30:13</td><td>2026-03-01 10:31:20</td></tr>
<tr class=""><td><span class="cb"></span></td><td>12331</td><td><span class="xb" style="background:#18bc9c"><svg width="12" height="12"><use href="#i-pencil"/></svg></span> <span class="xb" style="background:#e74c3c"><svg width="12" height="12"><use href="#i-trash2"/></svg></span></td><td>UB2603011029409046</td><td>456456</td><td>Lv 1</td><td class="l">Noori Rug &quot;Peshawar Tabasu…</td><td>1</td><td>10285.34</td><td>40.11</td><td><span class="st"><i></i>交易完成</span></td><td>2026-03-01 10:29:40</td><td>2026-03-01 10:30:02</td></tr>
<tr class="o"><td><span class="cb"></span></td><td>12331</td><td><span class="xb" style="background:#18bc9c"><svg width="12" height="12"><use href="#i-pencil"/></svg></span> <span class="xb" style="background:#e74c3c"><svg width="12" height="12"><use href="#i-trash2"/></svg></span></td><td>UB2603011025298978</td><td>456456</td><td>Lv 1</td><td class="l">Cafe C2Y366P3MD1 36 Inch…</td><td>1</td><td>10342.28</td><td>40.33</td><td><span class="st"><i></i>交易完成</span></td><td>2026-03-01 10:25:29</td><td>2026-03-01 10:26:11</td></tr>
<tr class=""><td><span class="cb"></span></td><td>12331</td><td><span class="xb" style="background:#18bc9c"><svg width="12" height="12"><use href="#i-pencil"/></svg></span> <span class="xb" style="background:#e74c3c"><svg width="12" height="12"><use href="#i-trash2"/></svg></span></td><td>UB2603011019509478</td><td>456456</td><td>Lv 1</td><td class="l">Breitling Chronomat GMT AB…</td><td>1</td><td>10370</td><td>40.44</td><td><span class="st"><i></i>交易完成</span></td><td>2026-03-01 10:19:50</td><td>2026-03-01 10:20:31</td></tr>
<tr class="o"><td><span class="cb"></span></td><td>12331</td><td><span class="xb" style="background:#18bc9c"><svg width="12" height="12"><use href="#i-pencil"/></svg></span> <span class="xb" style="background:#e74c3c"><svg width="12" height="12"><use href="#i-trash2"/></svg></span></td><td>UB2602271027577897</td><td>456456</td><td>Lv 1</td><td class="l">Cafe C2Y366P3MD1 36 Inch…</td><td>1</td><td>10342.28</td><td>40.33</td><td><span class="st"><i></i>交易完成</span></td><td>2026-02-27 10:27:57</td><td>2026-02-27 10:28:40</td></tr>
<tr class=""><td><span class="cb"></span></td><td>12331</td><td><span class="xb" style="background:#18bc9c"><svg width="12" height="12"><use href="#i-pencil"/></svg></span> <span class="xb" style="background:#e74c3c"><svg width="12" height="12"><use href="#i-trash2"/></svg></span></td><td>UB2602271026076490</td><td>456456</td><td>Lv 1</td><td class="l">Adamant Custom 18X-Core …</td><td>1</td><td>10299.99</td><td>40.16</td><td><span class="st"><i></i>交易完成</span></td><td>2026-02-27 10:26:07</td><td>2026-02-27 10:26:52</td></tr>
<tr class="o"><td><span class="cb"></span></td><td>12331</td><td><span class="xb" style="background:#18bc9c"><svg width="12" height="12"><use href="#i-pencil"/></svg></span> <span class="xb" style="background:#e74c3c"><svg width="12" height="12"><use href="#i-trash2"/></svg></span></td><td>UB2602271020075460</td><td>456456</td><td>Lv 1</td><td class="l">Speedaire 80 gal 53 x 52 x 2…</td><td>1</td><td>10173.68</td><td>39.67</td><td><span class="st"><i></i>交易完成</span></td><td>2026-02-27 10:20:07</td><td>2026-02-27 10:20:45</td></tr>
<tr class=""><td><span class="cb"></span></td><td>12331</td><td><span class="xb" style="background:#18bc9c"><svg width="12" height="12"><use href="#i-pencil"/></svg></span> <span class="xb" style="background:#e74c3c"><svg width="12" height="12"><use href="#i-trash2"/></svg></span></td><td>UB2602271017235243</td><td>456456</td><td>Lv 1</td><td class="l">TechMikeNY Server 2.60Ghz…</td><td>1</td><td>10210.32</td><td>39.82</td><td><span class="st"><i></i>交易完成</span></td><td>2026-02-27 10:17:23</td><td>2026-02-27 10:18:04</td></tr>
<tr class="o"><td><span class="cb"></span></td><td>12331</td><td><span class="xb" style="background:#18bc9c"><svg width="12" height="12"><use href="#i-pencil"/></svg></span> <span class="xb" style="background:#e74c3c"><svg width="12" height="12"><use href="#i-trash2"/></svg></span></td><td>UB2602271015451496</td><td>456456</td><td>Lv 1</td><td class="l">Meraki | MS250-48LP-HW | …</td><td>1</td><td>10140</td><td>39.54</td><td><span class="st"><i></i>交易完成</span></td><td>2026-02-27 10:15:45</td><td>2026-02-27 10:16:20</td></tr>
<tr class=""><td><span class="cb"></span></td><td>12331</td><td><span class="xb" style="background:#18bc9c"><svg width="12" height="12"><use href="#i-pencil"/></svg></span> <span class="xb" style="background:#e74c3c"><svg width="12" height="12"><use href="#i-trash2"/></svg></span></td><td>UB2602271014289729</td><td>456456</td><td>Lv 1</td><td class="l">Noori Rug Pak-Persian Firdo…</td><td>1</td><td>10059.99</td><td>39.23</td><td><span class="st"><i></i>交易完成</span></td><td>2026-02-27 10:14:28</td><td>2026-02-27 10:15:03</td></tr>
</table>
<div style="position:absolute;left:0;top:416px"></div></div>
<div style="position:absolute;left:15px;top:539px;width:1191px;height:16px;background:#fafafa"><svg width="6" height="8" viewBox="0 0 6 8" style="position:absolute;left:5px;top:3.500px;color:#666"><path d="M6 0v8L0 4z"/></svg><svg width="6" height="8" viewBox="0 0 6 8" style="position:absolute;right:5px;top:3.500px;color:#666"><path d="M0 0v8l6-4z"/></svg><div style="position:absolute;left:18px;top:3px;width:904px;height:9px;border-radius:4.500px;background:#8b8b8b"></div></div>
<div style="position:absolute;left:15px;top:565px;line-height:32px;font-size:13px;color:#333;white-space:nowrap">显示第 1 到第 10 条记录，总共 59 条记录 每页显示 <span style="display:inline-block;width:51px;height:31px;border:1px solid #ddd;border-radius:3px;background:#f4f4f4;vertical-align:top;text-align:center;line-height:29px;font-size:12px;margin:1px 2px 0 1px">10<svg width="8.500" height="4.500" viewBox="0 0 8 5" preserveAspectRatio="none" style="margin-top:-1px;margin-left:3px"><path d="M0 5h8L4 0z"/></svg></span> 条记录</div>
<div class="pg" style="left:774.3px;width:65.0px;border-radius:3px 0 0 3px;">上一页</div>
<div class="pg" style="left:838.3px;width:33.1px;background:#2c3e50;border-color:#2c3e50;color:#fff;z-index:2;">1</div>
<div class="pg" style="left:870.4px;width:33.1px;">2</div>
<div class="pg" style="left:902.5px;width:33.1px;">3</div>
<div class="pg" style="left:934.6px;width:33.1px;">4</div>
<div class="pg" style="left:966.7px;width:33.1px;">5</div>
<div class="pg" style="left:998.8px;width:33.1px;">6</div>
<div class="pg" style="left:1030.9px;width:64.5px;border-radius:0 3px 3px 0;">下一页</div>
<div style="position:absolute;left:1101px;top:564px;width:50px;height:31px;border:1px solid #cfd3e0;background:#fff"></div>
<div style="position:absolute;left:1156px;top:564px;width:50px;height:31px;border:1px solid #ddd;border-radius:3px;background:#f4f4f4;text-align:center;line-height:29px;font-size:12px;color:#555">跳转</div>
</div>
<svg id="stamp" width="300" height="300" viewBox="-150 -150 300 300" style="position:absolute;left:864.5px;top:147px;overflow:visible;fill:#f00">
<circle cx="0.100" cy="1.300" r="139.950" style="fill:none;stroke:#f00;stroke-width:5.300"/>
<g transform="translate(0.100 1.300)" font-family="'Liberation Sans',sans-serif" font-weight="bold" font-size="24" text-anchor="middle">
<text transform="rotate(-106.9) translate(0,-107) scale(0.789,1.179)">w</text><text transform="rotate(-92.5) translate(0,-107) scale(0.761,1.200)">w</text><text transform="rotate(-78.8) translate(0,-107) scale(0.773,1.191)">w</text><text transform="rotate(-67.3) translate(0,-107) scale(0.811,1.163)">.</text><text transform="rotate(-52.0) translate(0,-107) scale(0.889,1.105)">h</text><text transform="rotate(-38.8) translate(0,-107) scale(0.967,1.048)">a</text><text transform="rotate(-25.4) translate(0,-107) scale(1.037,0.996)">i</text><text transform="rotate(-10.8) translate(0,-107) scale(1.088,0.959)">w</text><text transform="rotate(0.8) translate(0,-107) scale(1.100,0.950)">a</text><text transform="rotate(14.4) translate(0,-107) scale(1.079,0.965)">i</text><text transform="rotate(28.0) translate(0,-107) scale(1.025,1.005)">y</text><text transform="rotate(41.3) translate(0,-107) scale(0.952,1.059)">m</text><text transform="rotate(52.6) translate(0,-107) scale(0.885,1.108)">.</text><text transform="rotate(68.5) translate(0,-107) scale(0.806,1.166)">c</text><text transform="rotate(81.8) translate(0,-107) scale(0.767,1.195)">o</text><text transform="rotate(94.2) translate(0,-107) scale(0.762,1.199)">m</text>
</g>
<text x="5.500" y="15.500" text-anchor="middle" font-family="'Noto Serif CJK SC','Noto Sans CJK SC',serif" font-weight="bold" font-size="36" letter-spacing="6" transform="skewX(-10)">海外源码</text>
<text x="1.500" y="81" text-anchor="middle" font-family="'Liberation Sans',sans-serif" font-weight="bold" font-size="27" letter-spacing="1.700">haiwaiym.com</text>
<g transform="translate(0.100 1.300)" font-family="'Liberation Sans',sans-serif" font-size="13" text-anchor="middle">
<text transform="rotate(37.0) translate(0,131)">h</text><text transform="rotate(30.4) translate(0,131)">a</text><text transform="rotate(23.9) translate(0,131)">i</text><text transform="rotate(17.3) translate(0,131)">w</text><text transform="rotate(10.8) translate(0,131)">a</text><text transform="rotate(4.2) translate(0,131)">i</text><text transform="rotate(-2.4) translate(0,131)">y</text><text transform="rotate(-8.9) translate(0,131)">m</text><text transform="rotate(-15.5) translate(0,131)">.</text><text transform="rotate(-22.0) translate(0,131)">c</text><text transform="rotate(-28.6) translate(0,131)">o</text><text transform="rotate(-35.2) translate(0,131)">m</text>
</g>
</svg>
</body>
</html>
